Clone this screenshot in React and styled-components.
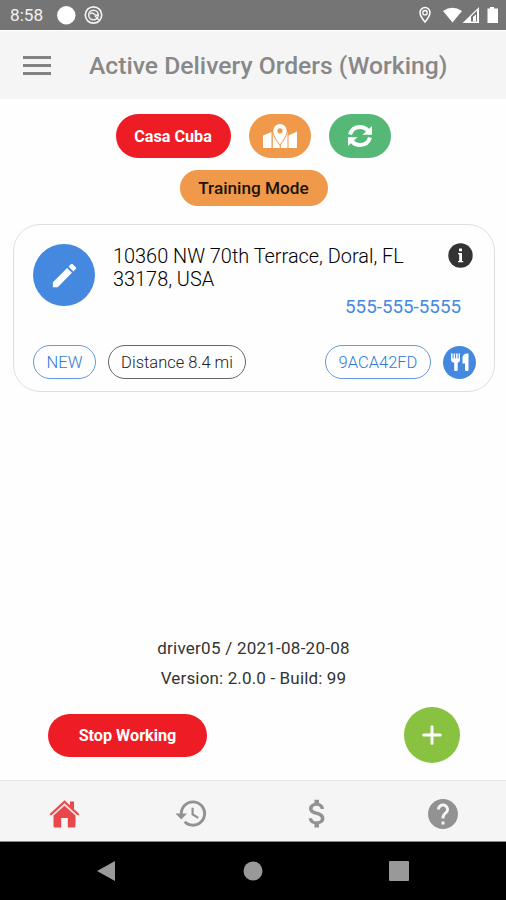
import React from "react";
import styled, { createGlobalStyle } from "styled-components";
import { MdEdit, MdHistory, MdAttachMoney, MdHelp } from "react-icons/md";

const GlobalStyle = createGlobalStyle`
  * {
    box-sizing: border-box;
  }
  body {
    margin: 0;
    background: #fff;
    font-family: Roboto, "Liberation Sans", sans-serif;
  }
`;

const Screen = styled.div`
  display: flex;
  flex-direction: column;
  width: 506px;
  height: 900px;
  overflow: hidden;
  background: #fefefe;
`;

const StatusBar = styled.div`
  display: flex;
  align-items: center;
  justify-content: space-between;
  height: 30px;
  padding: 0 7px 0 10px;
  background: #757575;
  color: #fff;
`;

const StatusGroup = styled.div`
  display: flex;
  align-items: center;
`;

const Clock = styled.span`
  width: 47px;
  font-size: 17.2px;
  line-height: 30px;
  color: #f2f2f2;
`;

const Header = styled.header`
  display: flex;
  align-items: center;
  height: 69px;
  padding: 2px 23px 0;
  background: #f5f5f5;
  border-top: 1px solid #fff;
`;

const MenuButton = styled.div`
  display: flex;
  flex-direction: column;
  gap: 5px;
  width: 28px;
  margin: 0 38px 2px 0;
`;

const MenuLine = styled.span`
  height: 3px;
  background: #828282;
`;

const Title = styled.h1`
  margin: 0;
  font-size: 24.7px;
  font-weight: 500;
  line-height: 30px;
  white-space: nowrap;
  color: #888;
`;

const Main = styled.main`
  display: flex;
  flex-direction: column;
  flex: 1;
  padding-top: 15px;
`;

const Actions = styled.div`
  display: flex;
  justify-content: center;
  gap: 18px;
`;

const Pill = styled.div`
  display: flex;
  align-items: center;
  justify-content: center;
  width: ${(props) => props.$width}px;
  height: ${(props) => props.$height || 44}px;
  border-radius: 22px;
  background: ${(props) => props.$bg};
  color: ${(props) => props.$color || "#fff"};
  font-size: ${(props) => props.$size || 16.2}px;
  font-weight: ${(props) => props.$weight || 700};
  white-space: nowrap;
`;

const ModeRow = styled.div`
  display: flex;
  justify-content: center;
  margin-top: 12px;
  padding-left: 1px;
`;

const Card = styled.section`
  display: flex;
  flex-direction: column;
  justify-content: space-between;
  width: 482px;
  height: 168px;
  margin: 18px 0 0 13px;
  padding: 19px 18px 12px 19px;
  border: 1px solid #dedede;
  border-radius: 27px;
`;

const CardTop = styled.div`
  display: flex;
  align-items: flex-start;
`;

const RoundButton = styled.div`
  display: flex;
  flex-shrink: 0;
  align-items: center;
  justify-content: center;
  width: ${(props) => props.$size}px;
  height: ${(props) => props.$size}px;
  border-radius: 50%;
  background: ${(props) => props.$bg};
  color: #fff;
`;

const Details = styled.div`
  display: flex;
  flex: 1;
  flex-direction: column;
  margin-left: 18px;
`;

const Address = styled.div`
  width: 310px;
  padding-top: 1px;
  font-size: 19.9px;
  font-weight: 300;
  line-height: 23px;
  color: #000;
`;

const Phone = styled.div`
  align-self: flex-end;
  margin-top: 5px;
  margin-right: -13px;
  font-size: 18.8px;
  line-height: 23px;
  color: #4489df;
`;

const Tags = styled.div`
  display: flex;
  align-items: center;
`;

const Tag = styled.div`
  display: flex;
  align-items: center;
  justify-content: center;
  width: ${(props) => props.$width}px;
  height: 34px;
  margin-right: 12px;
  margin-left: ${(props) => (props.$push ? "auto" : 0)};
  border: 1px solid ${(props) => props.$border};
  border-radius: 17px;
  color: ${(props) => props.$color};
  font-size: 16.5px;
  font-weight: 300;
  white-space: nowrap;
`;

const About = styled.div`
  margin-top: auto;
  padding: 0 0 14px 1px;
  font-size: 17px;
  line-height: 29.5px;
  text-align: center;
  color: #333;
`;

const AboutLine = styled.div`
  letter-spacing: ${(props) => props.$spacing || 0}px;
`;

const BottomActions = styled.div`
  display: flex;
  align-items: center;
  justify-content: space-between;
  padding: 0 46px 17px 48px;
`;

const TabBar = styled.nav`
  display: grid;
  grid-template-columns: repeat(4, 1fr);
  height: 62px;
  padding: 5px 0 0 2px;
  background: #f5f5f5;
  border-top: 1px solid #e6e6e6;
  border-bottom: 1px solid #888;
`;

const Tab = styled.div`
  display: flex;
  align-items: center;
  justify-content: center;
  color: ${(props) => (props.$active ? "#e8484b" : "#929292")};
`;

const SystemBar = styled.div`
  display: flex;
  align-items: center;
  justify-content: space-between;
  height: 58px;
  padding: 0 97px 0 96px;
  background: #000;
`;

const MapIcon = () => (
  <svg width="36" height="28" viewBox="0 0 36 28">
    <path d="M1 13.500L9.500 10V26H1zM10.800 10.500h7V26h-7zM18.800 10.500h6.700V26h-6.700zM26.500 13.500L35 9.500V26h-8.500z" fill="#fff" />
    <path
      d="M18 2a6.800 6.800 0 0 0-6.800 6.800C11.200 14 18 22.500 18 22.500s6.800-8.500 6.800-13.700A6.800 6.800 0 0 0 18 2z"
      fill="#fff"
      stroke="#f0994a"
      strokeWidth="1.600"
      paintOrder="stroke"
    />
    <circle cx="18" cy="8.800" r="2.600" fill="#f0994a" />
  </svg>
);

const RefreshIcon = () => (
  <svg width="26" height="26" viewBox="0 0 26 26">
    <path d="M3 11.500C4.500 6.500 8.500 4 13 4c3.500 0 6 1.200 8 3.800" fill="none" stroke="#fff" strokeWidth="4" />
    <path d="M23 14.500C21.500 19.500 17.500 22 13 22c-3.500 0-6-1.200-8-3.800" fill="none" stroke="#fff" strokeWidth="4" />
    <path d="M25 3V11.800H15.500zM1 23V14.200H10.500z" fill="#fff" />
  </svg>
);

const InfoIcon = styled(({ className }) => (
  <svg className={className} width="25" height="25" viewBox="0 0 25 25">
    <circle cx="12.500" cy="12.500" r="12.200" fill="#333" />
    <path d="M11 5.500h3v2.700h-3zM10 10h4v8h1.300v1.300H10V18h1.200v-6.700H10z" fill="#fff" />
  </svg>
))`
  flex-shrink: 0;
  margin: -1px 3px 0 0;
`;

const CutleryIcon = () => (
  <svg width="20" height="20" viewBox="0 0 20 20" fill="#fff">
    <path d="M1 1.500h1.600v5h1V1.500h1.500v5h1V1.500h1.500v5h1V1.500H10v6.200c0 1.500-.8 2.500-2.300 3V18q0 1-1 1H5.200q-1 0-1-1v-7.300C2 10.200 1 9.200 1 7.700z" />
    <path d="M18.500 1.500V18q0 1-1 1H16q-1 0-1-1v-6.500h-2.500V6c0-2.700 2-4.500 4.500-4.500z" />
  </svg>
);

const HomeIcon = () => (
  <svg width="30" height="30" viewBox="0 0 30 30" fill="none">
    <path d="M14.500 6.800L25.500 16.500v10.500q0 1.500-1.500 1.500H17.800V19h-6.600v9.500H5Q3.500 28.500 3.500 27V16.500z" fill="currentColor" />
    <path d="M20 2.500H24v8l-4-3.700z" fill="currentColor" />
    <path d="M1 15.300L14.500 2.800l13.500 12.500" stroke="currentColor" strokeWidth="2.200" strokeLinecap="round" />
    <path d="M2.800 16L14.500 5.300 26.200 16" stroke="#f5d0d0" strokeWidth=".9" />
  </svg>
);

const PlusIcon = () => (
  <svg width="20" height="20" viewBox="0 0 20 20">
    <path d="M10 1.700v16.600M1.700 10h16.600" stroke="#fff" strokeWidth="3" strokeLinecap="round" />
  </svg>
);

const StatusDots = () => (
  <svg width="48" height="22" viewBox="0 0 48 22">
    <circle cx="9.300" cy="11.300" r="9.200" fill="#fff" />
    <g fill="none" stroke="#f2f2f2">
      <circle cx="36.500" cy="11" r="8.200" strokeWidth="1.700" />
      <circle cx="36.500" cy="11" r="4.800" strokeWidth="1.500" />
      <path d="M33 10q2-2 4 0t4 1M38 12l4 4" strokeWidth="1.400" />
    </g>
  </svg>
);

const StatusIcons = () => (
  <svg width="84" height="20" viewBox="0 0 84 20">
    <path d="M10 2.500a5 5 0 0 0-5 5c0 3.600 5 9.500 5 9.500s5-5.900 5-9.500a5 5 0 0 0-5-5z" fill="none" stroke="#fff" strokeWidth="1.500" />
    <circle cx="10" cy="7.700" r="2.200" fill="none" stroke="#fff" strokeWidth="1.300" />
    <path d="M28 6Q37.500 -.5 47 6L37.500 17.500z" fill="#fff" />
    <path d="M47.500 18L64 2v16z" fill="#fff" />
    <path d="M56 11.500L62 5.500V16.500H56z" fill="#757575" />
    <path d="M58 12L61 9.500V16.500H58z" fill="#fff" />
    <path d="M72.500 3.500h2.500V2h4v1.500H83V18H72.500z" fill="#fff" />
  </svg>
);

const App = () => {
  return (
    <Screen>
      <GlobalStyle />
      <StatusBar>
        <StatusGroup>
          <Clock>8:58</Clock>
          <StatusDots />
        </StatusGroup>
        <StatusIcons />
      </StatusBar>
      <Header>
        <MenuButton>
          <MenuLine />
          <MenuLine />
          <MenuLine />
        </MenuButton>
        <Title>Active Delivery Orders (Working)</Title>
      </Header>
      <Main>
        <Actions>
          <Pill $width={115} $bg="#ee1c25">Casa Cuba</Pill>
          <Pill $width={62} $bg="#f0994a">
            <MapIcon />
          </Pill>
          <Pill $width={62} $bg="#55b877">
            <RefreshIcon />
          </Pill>
        </Actions>
        <ModeRow>
          <Pill $width={148} $height={36} $bg="#f0994a" $color="#1c120a" $size={17.2} $weight={500}>
            Training Mode
          </Pill>
        </ModeRow>
        <Card>
          <CardTop>
            <RoundButton $size={62} $bg="#4489df">
              <MdEdit size={31} />
            </RoundButton>
            <Details>
              <Address>10360 NW 70th Terrace, Doral, FL 33178, USA</Address>
              <Phone>555-555-5555</Phone>
            </Details>
            <InfoIcon />
          </CardTop>
          <Tags>
            <Tag $width={63} $border="#6699df" $color="#2f7ad8">NEW</Tag>
            <Tag $width={138} $border="#666" $color="#222">Distance 8.4 mi</Tag>
            <Tag $width={106} $border="#6699df" $color="#2f7ad8" $push>9ACA42FD</Tag>
            <RoundButton $size={33} $bg="#4489df">
              <CutleryIcon />
            </RoundButton>
          </Tags>
        </Card>
        <About>
          <AboutLine $spacing={0.25}>driver05 / 2021-08-20-08</AboutLine>
          <AboutLine $spacing={0.15}>Version: 2.0.0 - Build: 99</AboutLine>
        </About>
        <BottomActions>
          <Pill $width={159} $height={43} $bg="#ee1c25">Stop Working</Pill>
          <RoundButton $size={56} $bg="#89c140">
            <PlusIcon />
          </RoundButton>
        </BottomActions>
      </Main>
      <TabBar>
        <Tab $active>
          <HomeIcon />
        </Tab>
        <Tab>
          <MdHistory size={35} />
        </Tab>
        <Tab>
          <MdAttachMoney size={37} />
        </Tab>
        <Tab>
          <MdHelp size={36} />
        </Tab>
      </TabBar>
      <SystemBar>
        <svg width="20" height="22" fill="#999">
          <path d="M1 11L19 1v20z" />
        </svg>
        <svg width="20" height="20" fill="#999">
          <circle cx="10" cy="10" r="9.500" />
        </svg>
        <svg width="20" height="20" fill="#999">
          <rect width="20" height="20" rx="1" />
        </svg>
      </SystemBar>
    </Screen>
  );
};

export default App;
